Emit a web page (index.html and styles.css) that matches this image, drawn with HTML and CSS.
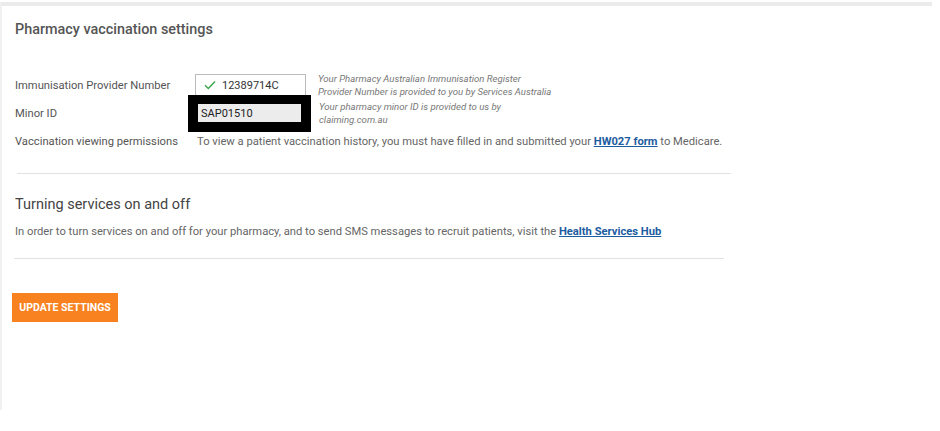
FILE: index.html
```html
<!DOCTYPE html>
<html lang="en">
<head>
  <meta charset="UTF-8">
  <title>Pharmacy vaccination settings</title>
  <link rel="stylesheet" href="styles.css">
</head>
<body>

  <div class="panel">
    <h2 class="panel-title">Pharmacy vaccination settings</h2>

    <!-- Settings rows -->
    <div class="settings">
      <div class="row">
        <span class="label">Immunisation Provider Number</span>
        <div class="field">
          <svg class="check" width="12" height="10" viewBox="0 0 12 10">
            <path d="M1 5.2 L4.3 8.4 L11 1.4" fill="none" stroke="#3aa54a" stroke-width="1.4"/>
          </svg>
          <span>12389714C</span>
        </div>
        <p class="hint">Your Pharmacy Australian Immunisation Register<br>Provider Number is provided to you by Services Australia</p>
      </div>

      <div class="row">
        <span class="label">Minor ID</span>
        <div class="redact">
          <div class="field field-readonly">SAP01510</div>
        </div>
        <p class="hint">Your pharmacy minor ID is provided to us by<br>claiming.com.au</p>
      </div>

      <div class="row">
        <span class="label">Vaccination viewing permissions</span>
        <p class="note">To view a patient vaccination history, you must have filled in and submitted your <a href="#">HW027 form</a> to Medicare.</p>
      </div>
    </div>

    <hr class="rule">

    <h3 class="section-title">Turning services on and off</h3>
    <p class="section-text">In order to turn services on and off for your pharmacy, and to send SMS messages to recruit patients, visit the <a href="#">Health Services Hub</a></p>

    <hr class="rule rule-short">

    <button type="button" class="btn-update">Update Settings</button>
  </div>

</body>
</html>
```

FILE: styles.css
```css
body {
  margin: 0;
  background-color: #fff;
  font-family: Roboto, "Liberation Sans", sans-serif;
  color: #555;
}

.panel {
  width: 917px;
  height: 404px;
  margin-top: 2px;
  border-top: 4px solid #ebebeb;
  border-left: 2px solid #f1f1f1;
  padding: 0 0 0 13px;
}

.panel-title {
  margin: 0;
  padding-top: 15px;
  font-size: 14.4px;
  font-weight: 500;
  color: #555;
  line-height: 18px;
}

.settings {
  margin-top: 32px;
}

.row {
  display: flex;
  align-items: center;
  height: 28px;
}

.label {
  width: 180px;
  font-size: 11.2px;
  color: #555;
}

.field {
  display: flex;
  align-items: center;
  gap: 6px;
  width: 111px;
  height: 22px;
  padding-left: 8px;
  box-sizing: border-box;
  border: 1px solid #bbb;
  font-size: 11px;
  color: #333;
}

.redact {
  display: flex;
  align-items: center;
  margin-left: -7px;
  width: 123px;
  height: 37px;
  padding-left: 10px;
  box-sizing: border-box;
  background-color: #000;
}

.field-readonly {
  width: 103px;
  height: 18px;
  padding-left: 3px;
  border: none;
  background-color: #ececec;
  color: #222;
}

.row .redact + .hint {
  margin-left: 8px;
}

.hint {
  margin: 0 0 0 12px;
  font-size: 9.6px;
  font-style: italic;
  line-height: 13px;
  color: #777;
}

.note {
  margin: 0 0 0 2px;
  font-size: 11.2px;
  color: #666;
}

a {
  color: #1d5c9f;
  font-weight: bold;
}

.rule {
  width: 714px;
  margin: 18px 0 0 2px;
  border: none;
  border-top: 1px solid #e2e2e2;
}

.section-title {
  margin: 22px 0 0 0;
  font-size: 14.5px;
  font-weight: 400;
  color: #444;
}

.section-text {
  margin: 12px 0 0 0;
  font-size: 11.2px;
  color: #666;
}

.rule-short {
  width: 710px;
  margin: 20px 0 0 -1px;
}

.btn-update {
  margin: 34px 0 0 -3px;
  width: 106px;
  height: 29px;
  padding: 0;
  border: none;
  background-color: #f7821f;
  color: #fff;
  font-family: Roboto, "Liberation Sans", sans-serif;
  font-size: 10.5px;
  font-weight: bold;
  text-transform: uppercase;
  white-space: nowrap;
  cursor: pointer;
}
```
